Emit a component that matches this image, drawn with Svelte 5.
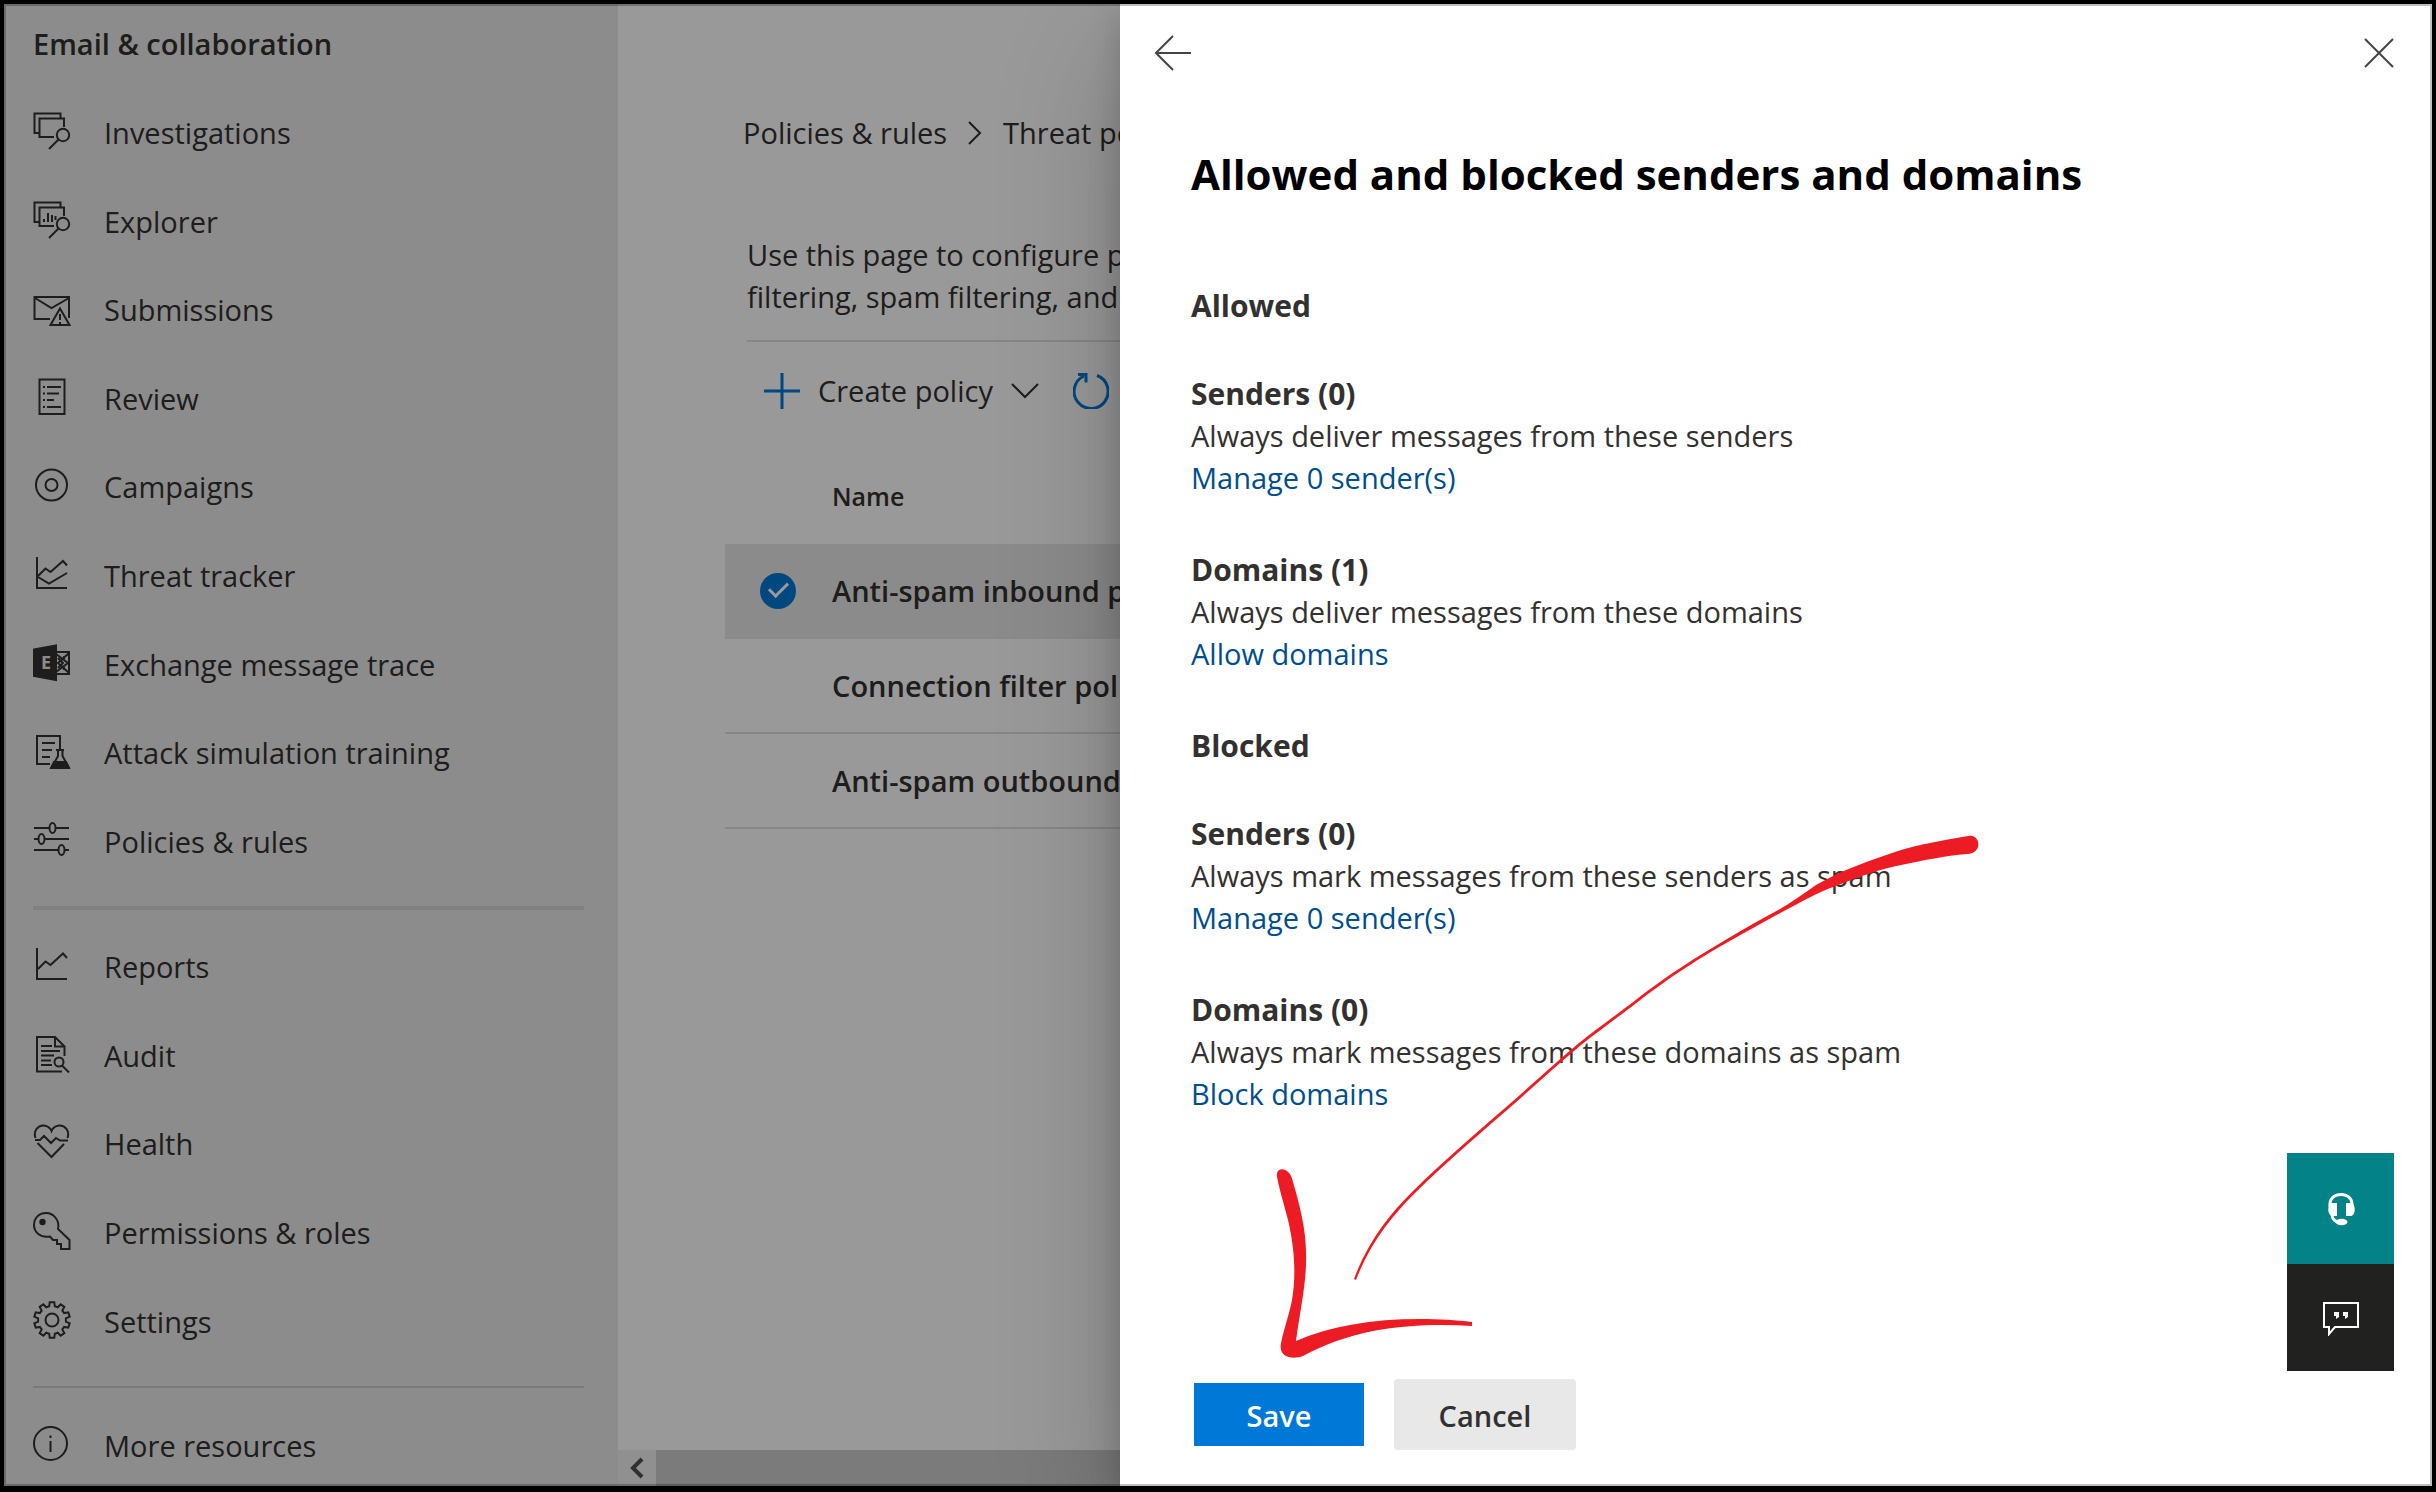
<script>
  const primary = [
    { icon: 'investigations', label: 'Investigations' },
    { icon: 'explorer', label: 'Explorer' },
    { icon: 'submissions', label: 'Submissions' },
    { icon: 'review', label: 'Review' },
    { icon: 'campaigns', label: 'Campaigns' },
    { icon: 'tracker', label: 'Threat tracker' },
    { icon: 'exchange', label: 'Exchange message trace' },
    { icon: 'attack', label: 'Attack simulation training' },
    { icon: 'policies', label: 'Policies & rules' }
  ];
  const secondary = [
    { icon: 'reports', label: 'Reports' },
    { icon: 'audit', label: 'Audit' },
    { icon: 'health', label: 'Health' },
    { icon: 'permissions', label: 'Permissions & roles' },
    { icon: 'settings', label: 'Settings' }
  ];
  const more = [{ icon: 'info', label: 'More resources' }];

  const sections = [
    {
      title: 'Allowed',
      groups: [
        { title: 'Senders (0)', text: 'Always deliver messages from these senders', link: 'Manage 0 sender(s)' },
        { title: 'Domains (1)', text: 'Always deliver messages from these domains', link: 'Allow domains' }
      ]
    },
    {
      title: 'Blocked',
      groups: [
        { title: 'Senders (0)', text: 'Always mark messages from these senders as spam', link: 'Manage 0 sender(s)' },
        { title: 'Domains (0)', text: 'Always mark messages from these domains as spam', link: 'Block domains' }
      ]
    }
  ];

  const policies = [
    { name: 'Anti-spam inbound policy', selected: true },
    { name: 'Connection filter policy', selected: false },
    { name: 'Anti-spam outbound policy', selected: false }
  ];

  // Outline of a ten-toothed gear centred in the 38 unit icon box.
  function gearPath(teeth, outer, inner) {
    const step = (Math.PI * 2) / teeth;
    const points = [];
    for (let i = 0; i < teeth; i++) {
      const a = i * step - Math.PI / 2;
      for (const [offset, r] of [[-0.32, inner], [-0.2, outer], [0.2, outer], [0.32, inner]]) {
        const t = a + offset * step;
        points.push(`${(19 + r * Math.cos(t)).toFixed(2)} ${(19 + r * Math.sin(t)).toFixed(2)}`);
      }
    }
    return `M${points.join('L')}Z`;
  }
  const gear = gearPath(10, 18, 14);
</script>

{#snippet navIcon(name)}
  <svg class="icon" viewBox="0 0 38 38" aria-hidden="true">
    {#if name === 'investigations' || name === 'explorer'}
      <path d="M6 21H1.5V1.5H27.5V6" />
      <path d="M31 15V6.500H6.500V25H21" />
      <circle cx="30" cy="23" r="6.200" />
      <path d="M25.500 27.500L16 37" />
      {#if name === 'explorer'}
        <path d="M11 21V18M15 21V12M19 21V14M22.500 19V15" />
      {/if}
    {:else if name === 'submissions'}
      <path d="M17 30H1.500V8H36V29" />
      <path d="M2 9L18.500 19L36 9" />
      <path d="M27 19.500L17.500 36H36.500Z" />
      <path d="M27 25V31M27 33V35" />
    {:else if name === 'review'}
      <path d="M6.500 1.500H31.500V36H6.500Z" />
      <path d="M10 9H12M14 9H28M10 15.500H12M14 15.500H26M10 22H12M14 22H21M10 29H12M14 29H28" />
    {:else if name === 'campaigns'}
      <circle cx="18.500" cy="19" r="15.500" />
      <circle cx="18.500" cy="19" r="6" />
    {:else if name === 'tracker'}
      <path d="M4 2V33H34" />
      <path d="M5 21L12.500 13.500L17.500 17L30 6L34 10.500" />
      <path d="M5 22L16 28.500L34 18" />
    {:else if name === 'exchange'}
      <path class="solid" d="M1 5.500L23 1.500V36L1 32Z" />
      <path d="M23 8H36V30H23" />
      <path d="M23 10L35 19L23 28M36 9L25 19L36 29M25 14L30 19L25 24M31 12V15M31 23V26" />
      <text x="8" y="25">E</text>
    {:else if name === 'attack'}
      <path d="M17 32H4V4H27V17" />
      <path d="M9 11H22M9 18H19M9 25H17" />
      <path d="M23 18H31M25 18V24L19 35H35.500L29.500 24V18" />
      <path class="solid" d="M21 30H33L36 36H18Z" />
    {:else if name === 'policies'}
      <path d="M1 7H16M23 7H36M1 18H5M12 18H36M1 29H25M32 29H36" />
      <ellipse cx="19.500" cy="7" rx="3" ry="5" />
      <ellipse cx="8.500" cy="18" rx="3" ry="5" />
      <ellipse cx="28.500" cy="29" rx="3" ry="5" />
    {:else if name === 'reports'}
      <path d="M4 2V33H34" />
      <path d="M5 23L12.500 15.500L17.500 19L30 7.500L34 12" />
    {:else if name === 'audit'}
      <path d="M29 36.500H4V2H22L31.500 11.500V21" />
      <path d="M22 2V11.500H31" />
      <path d="M8 11H19M8 16H27M8 20.500H21M8 25.500H18M8 30H19" />
      <circle cx="26" cy="27" r="4.500" />
      <path d="M29 30.500L36 37.500" />
    {:else if name === 'health'}
      <path d="M2.500 15C0 8 5 2 11 2.500C15 3 17.500 5.500 18.500 8C19.500 5.500 22 3 26 2.500C32 2 37 8 34.500 15" />
      <path d="M2 17H7L11 13L18 20L23 15L27 17.500H35" />
      <path d="M4.500 20L18.500 34L31 21" />
    {:else if name === 'permissions'}
      <path d="M25 17C27 9 21 1 13 1C6 1 1 6 1 13C1 20 7 26 17 24.500L20 28H24V32H28V37H36.500V28Z" />
      <circle class="solid" cx="9.500" cy="10" r="2.200" />
    {:else if name === 'settings'}
      <path d={gear} />
      <circle cx="19" cy="19" r="6.500" />
    {:else if name === 'info'}
      <circle cx="17.500" cy="18.500" r="16.500" />
      <path d="M17.500 16V27M17.500 10.500V13" />
    {/if}
  </svg>
{/snippet}

{#snippet navList(items, size)}
  <ul class="nav-list {size}">
    {#each items as item}
      <li>
        <a class="nav-link" href="#{item.icon}">
          {@render navIcon(item.icon)}
          <span>{item.label}</span>
        </a>
      </li>
    {/each}
  </ul>
{/snippet}

<div class="screen">
  <nav class="sidebar" aria-label="Email & collaboration">
    <h2>Email &amp; collaboration</h2>
    {@render navList(primary, 'long')}
    <hr class="thick" />
    {@render navList(secondary, 'medium')}
    <hr />
    {@render navList(more, 'short')}
  </nav>

  <main class="page">
    <div class="content">
      <div class="breadcrumb">
        <a href="#policies">Policies &amp; rules</a>
        <svg viewBox="0 0 16 24" aria-hidden="true"><path d="M2 1L13 12L2 23" /></svg>
        <a href="#threat">Threat policies</a>
      </div>
      <p class="intro">
        Use this page to configure policies for<br />
        filtering, spam filtering, and
      </p>
      <div class="toolbar">
        <button type="button" class="tool">
          <svg class="blue" viewBox="0 0 36 36" aria-hidden="true"><path d="M18 0V36M0 18H36" /></svg>
          <span>Create policy</span>
          <svg class="chevron" viewBox="0 0 28 16" aria-hidden="true"><path d="M1 1L14 14L27 1" /></svg>
        </button>
        <button type="button" class="tool" aria-label="Refresh">
          <svg class="blue" viewBox="0 0 36 36" aria-hidden="true">
            <path d="M24 2.500A17 17 0 1 1 11 3" />
            <path d="M5 1.500H13V9.500" />
          </svg>
        </button>
      </div>
      <table>
        <thead>
          <tr><th class="pick"></th><th scope="col">Name</th></tr>
        </thead>
        <tbody>
          {#each policies as policy}
            <tr class:selected={policy.selected}>
              <td class="pick">
                {#if policy.selected}
                  <input type="checkbox" checked aria-label={policy.name} />
                {/if}
              </td>
              <td>{policy.name}</td>
            </tr>
          {/each}
        </tbody>
      </table>
    </div>
    <div class="scrollbar">
      <button type="button" aria-label="Scroll left">
        <svg viewBox="0 0 14 22" aria-hidden="true"><path d="M12 2L3 11L12 20" /></svg>
      </button>
    </div>
  </main>

  <div class="scrim"></div>

  <div class="drawer" role="dialog" aria-labelledby="drawer-title">
    <div class="drawer-bar">
      <button type="button" aria-label="Back">
        <svg viewBox="0 0 36 36" aria-hidden="true"><path d="M36 18H2M18 1L1 18L18 35" /></svg>
      </button>
      <button type="button" aria-label="Close">
        <svg viewBox="0 0 36 36" aria-hidden="true"><path d="M4 4L32 32M32 4L4 32" /></svg>
      </button>
    </div>
    <div class="drawer-body">
      <h1 id="drawer-title">Allowed and blocked senders and domains</h1>
      {#each sections as section}
        <section>
          <h2>{section.title}</h2>
          {#each section.groups as group}
            <div class="group">
              <h3>{group.title}</h3>
              <p>{group.text}</p>
              <a href="#edit">{group.link}</a>
            </div>
          {/each}
        </section>
      {/each}
    </div>
    <div class="actions">
      <button type="button" class="save">Save</button>
      <button type="button" class="cancel">Cancel</button>
    </div>

    <svg class="arrow" viewBox="1260 820 740 550" aria-hidden="true">
      <path
        d="M1968 836C1945 840 1920 844 1898 851C1868 861 1842 870 1816 885C1800 896 1785 907 1769 915
           C1742 930 1718 944 1694 959C1672 973 1655 985 1637 999C1616 1015 1598 1028 1579 1043
           C1560 1059 1541 1076 1521 1094C1504 1109 1485 1125 1466 1142C1448 1158 1430 1174 1412 1192
           C1390 1214 1368 1241 1354 1279L1356 1280C1370 1243 1392 1216 1414 1194
           C1432 1176 1450 1160 1468 1144C1487 1127 1506 1111 1523 1096C1543 1078 1562 1061 1581 1045
           C1600 1030 1618 1017 1639 1001C1657 987 1674 975 1696 961C1720 946 1744 933 1771 918
           C1796 905 1815 893 1836 886C1858 877 1880 869 1901 865C1925 860 1945 856 1967 854
           C1984 853 1980 833 1968 836Z"
      />
      <path
        d="M1277 1177C1275 1166 1290 1166 1293 1182C1300 1206 1306 1230 1306 1253C1307 1282 1300 1310 1296 1341
           C1330 1326 1372 1319 1420 1319C1440 1319 1456 1320 1472 1322V1326C1440 1324 1405 1325 1373 1331
           C1345 1337 1325 1344 1303 1356C1292 1360 1278 1357 1281 1343C1285 1325 1289 1315 1292 1300
           C1296 1276 1295 1250 1288 1220C1284 1204 1280 1192 1277 1177Z"
      />
    </svg>
  </div>

  <div class="widgets">
    <button type="button" class="help" aria-label="Need help?">
      <svg viewBox="0 0 36 36" aria-hidden="true">
        <path class="line" d="M7 16C6 8 11 3.500 18 3.500S30 8 29 16" />
        <path d="M9 12H14V25H9C4 24 4 13 9 12ZM23 12H28C33 13 33 24 28 25H23Z" />
        <path class="line" d="M9 23C9 29 13 31 17 31" />
        <ellipse cx="18.500" cy="31" rx="6" ry="3.200" />
      </svg>
    </button>
    <button type="button" class="feedback" aria-label="Give feedback">
      <svg viewBox="0 0 36 36" aria-hidden="true">
        <path class="line thin" d="M1 3H35V27H12L6 34V27H1Z" />
        <path d="M11 12H16V17L13 19V16H11ZM20 12H25V17L22 19V16H20Z" />
      </svg>
    </button>
  </div>
</div>

<style>
  :global(body) {
    background: #000;
  }

  .screen {
    box-sizing: border-box;
    position: relative;
    display: grid;
    grid-template-columns: 614px minmax(0, 1fr);
    height: 100vh;
    border: 4px solid #000;
    border-bottom-width: 6px;
    overflow: hidden;
    background: #fff;
    color: #323130;
    font-family: 'Open Sans', 'Noto Sans', sans-serif;
    font-size: 29px;
    line-height: 42px;
  }

  .screen::after {
    content: '';
    position: absolute;
    inset: 0;
    border: 2px solid rgba(0, 0, 0, 0.25);
    pointer-events: none;
  }

  h1,
  h2,
  h3,
  p,
  ul {
    margin: 0;
    padding: 0;
    font-size: inherit;
  }

  button {
    margin: 0;
    padding: 0;
    border: 0;
    background: none;
    color: inherit;
    font: inherit;
    cursor: pointer;
  }

  a {
    color: inherit;
    text-decoration: none;
  }

  svg {
    display: block;
    flex: none;
    fill: none;
    stroke: currentColor;
    stroke-width: 2;
  }

  .sidebar {
    min-height: 0;
    padding: 18px 34px 0 29px;
    background: #eaeaea;
  }

  .sidebar h2 {
    margin-bottom: 23px;
    font-weight: 600;
    line-height: 44px;
  }

  .nav-list {
    display: grid;
    grid-auto-rows: 1fr;
    list-style: none;
  }

  .long {
    height: 797px;
  }

  .medium {
    height: 443px;
  }

  .short {
    height: 89px;
  }

  .nav-link {
    display: flex;
    align-items: center;
    gap: 33px;
    height: 100%;
  }

  .icon {
    width: 38px;
    height: 38px;
    margin-bottom: 4px;
  }

  .icon .solid {
    fill: currentColor;
  }

  .icon text {
    fill: #eaeaea;
    stroke: none;
    font-size: 18px;
    font-weight: 700;
  }

  hr {
    height: 2px;
    margin: 20px 0 13px;
    border: 0;
    background: #cbcbcb;
  }

  hr.thick {
    height: 4px;
    background: #d6d6d6;
  }

  .page {
    display: flex;
    flex-direction: column;
    min-width: 0;
    min-height: 0;
  }

  .content {
    flex: 1;
    padding: 108px 0 0 107px;
  }

  .breadcrumb {
    display: flex;
    align-items: center;
    gap: 20px;
    padding-left: 18px;
  }

  .breadcrumb svg {
    width: 16px;
    height: 24px;
  }

  .intro {
    margin: 80px 0 0 22px;
    padding-bottom: 22px;
    border-bottom: 2px solid #e1dfdd;
    white-space: nowrap;
  }

  .toolbar {
    display: flex;
    align-items: center;
    gap: 34px;
    height: 98px;
    padding-left: 39px;
  }

  .tool {
    display: flex;
    align-items: center;
    gap: 18px;
  }

  .tool .blue {
    width: 36px;
    height: 36px;
    color: #0078d4;
    stroke-width: 3;
  }

  .tool .chevron {
    width: 28px;
    height: 16px;
  }

  table {
    width: 100%;
    border-spacing: 0;
    font-weight: 600;
  }

  th {
    height: 96px;
    padding: 8px 0 0;
    font-size: 25px;
    font-weight: 600;
    text-align: left;
  }

  td {
    height: 93px;
    padding: 0;
    border-bottom: 2px solid #e1dfdd;
  }

  .pick {
    width: 107px;
  }

  .selected td {
    border-color: #e8e8e8;
    background: #e8e8e8;
  }

  input[type='checkbox'] {
    appearance: none;
    display: grid;
    place-items: center;
    width: 36px;
    height: 36px;
    margin: 0 0 0 35px;
    border-radius: 50%;
    background: #0078d4;
  }

  input[type='checkbox']::after {
    content: '';
    width: 16px;
    height: 8px;
    margin-bottom: 6px;
    border: solid #fff;
    border-width: 0 0 3px 3px;
    rotate: -45deg;
  }

  .scrollbar {
    display: flex;
    height: 36px;
    background: #cdcdcd;
  }

  .scrollbar button {
    display: grid;
    place-items: center;
    width: 38px;
    background: #f1f1f1;
    color: #505050;
  }

  .scrollbar svg {
    width: 14px;
    height: 22px;
    stroke-width: 4;
  }

  .scrim {
    position: absolute;
    inset: 0;
    background: rgba(0, 0, 0, 0.4);
  }

  .drawer {
    box-sizing: border-box;
    position: absolute;
    inset: 0 0 0 auto;
    display: flex;
    flex-direction: column;
    width: 1312px;
    max-width: 100%;
    background: #fff;
    box-shadow:
      0 50px 115px rgba(0, 0, 0, 0.22),
      0 10px 30px rgba(0, 0, 0, 0.18);
  }

  .drawer-bar {
    display: flex;
    justify-content: space-between;
    padding: 31px 35px 0;
  }

  .drawer-bar svg {
    width: 36px;
    height: 36px;
    color: #444;
  }

  .drawer-body {
    flex: 1;
    padding: 73px 71px 0;
  }

  h1 {
    color: #000;
    font-size: 42px;
    font-weight: 700;
    line-height: 60px;
  }

  .drawer-body section {
    margin-top: 50px;
  }

  .drawer-body h1 + section {
    margin-top: 81px;
  }

  .drawer-body h2,
  .drawer-body h3 {
    font-size: 30px;
    font-weight: 700;
  }

  .group {
    margin-top: 50px;
  }

  h2 + .group {
    margin-top: 46px;
  }

  .group a {
    color: #004e8c;
  }

  .actions {
    display: flex;
    align-items: center;
    gap: 30px;
    padding: 0 74px 36px;
    font-weight: 600;
  }

  .save {
    width: 170px;
    height: 63px;
    padding-top: 3px;
    background: #0078d7;
    color: #fff;
  }

  .cancel {
    width: 182px;
    height: 71px;
    padding-top: 3px;
    border-radius: 4px;
    background: #e8e8e8;
  }

  .arrow {
    position: absolute;
    top: 816px;
    left: 140px;
    width: 740px;
    height: 550px;
    fill: #ed1c24;
    stroke: none;
    pointer-events: none;
  }

  .widgets {
    position: absolute;
    right: 38px;
    bottom: 115px;
    display: flex;
    flex-direction: column;
    width: 107px;
    color: #fff;
  }

  .widgets button {
    display: grid;
    place-items: center;
    height: 107px;
    background: #21211f;
  }

  .widgets .help {
    height: 111px;
    background: #038387;
  }

  .widgets svg {
    width: 36px;
    height: 36px;
    fill: currentColor;
    stroke: none;
  }

  .widgets .line {
    fill: none;
    stroke: currentColor;
    stroke-width: 3;
  }

  .widgets .thin {
    stroke-width: 2;
  }
</style>
